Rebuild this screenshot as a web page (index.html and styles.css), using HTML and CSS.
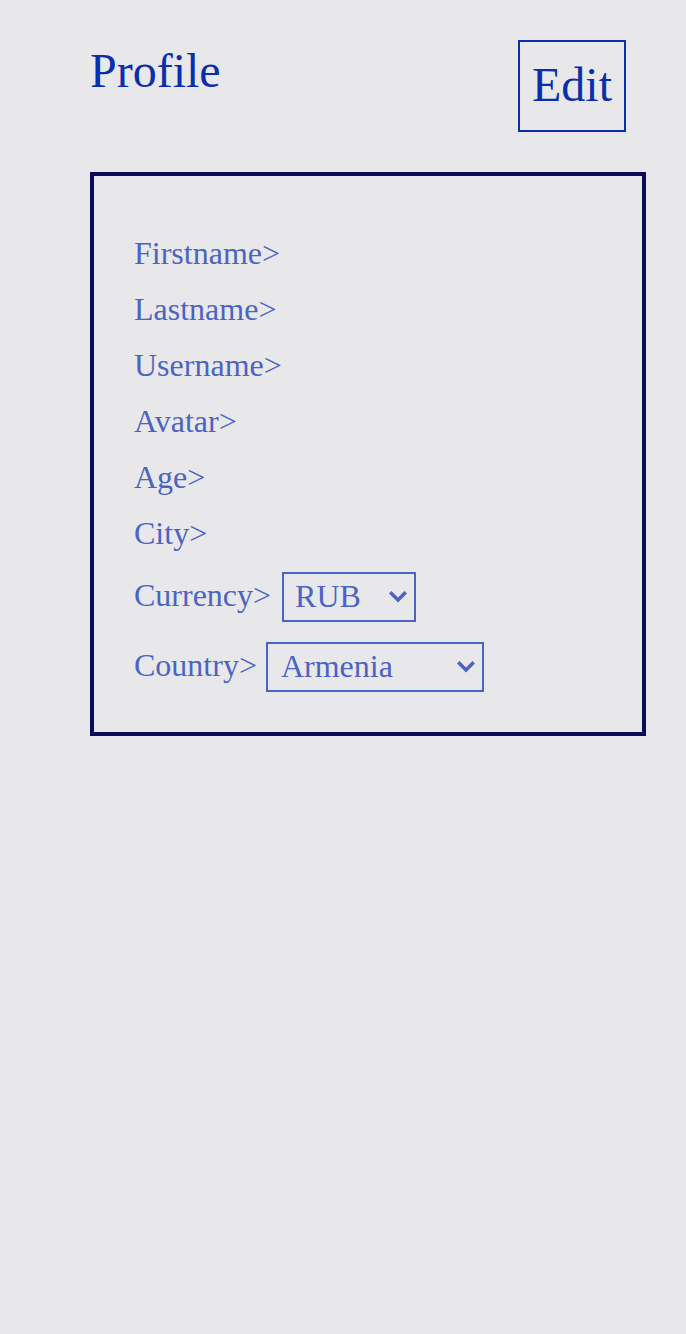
FILE: index.html
```html
<!DOCTYPE html>
<html>
<head>
<meta charset="utf-8">
<link rel="stylesheet" href="styles.css">
</head>
<body>
<header class="header">
  <h1 class="title">Profile</h1>
  <button class="edit-btn">Edit</button>
</header>
<section class="card">
  <div class="row">Firstname&gt;</div>
  <div class="row">Lastname&gt;</div>
  <div class="row">Username&gt;</div>
  <div class="row">Avatar&gt;</div>
  <div class="row">Age&gt;</div>
  <div class="row">City&gt;</div>
  <div class="row select-row currency-row">
    <span class="label label-currency">Currency&gt;</span>
    <span class="select-wrap">
      <select class="select select-currency">
        <option>RUB</option>
        <option>USD</option>
        <option>EUR</option>
      </select>
      <svg class="chevron" width="18" height="12" viewBox="0 0 18 12"><path d="M2.5 2.5 L9 9 L15.5 2.5" fill="none" stroke="#4b64c3" stroke-width="3.6" stroke-linecap="square"/></svg>
    </span>
  </div>
  <div class="row select-row country-row">
    <span class="label label-country">Country&gt;</span>
    <span class="select-wrap">
      <select class="select select-country">
        <option>Armenia</option>
        <option>Russia</option>
        <option>Georgia</option>
      </select>
      <svg class="chevron" width="18" height="12" viewBox="0 0 18 12"><path d="M2.5 2.5 L9 9 L15.5 2.5" fill="none" stroke="#4b64c3" stroke-width="3.6" stroke-linecap="square"/></svg>
    </span>
  </div>
</section>
</body>
</html>
```
FILE: styles.css
```css
html, body {
  margin: 0;
  padding: 0;
  background: #e8e8ea;
  font-family: "Liberation Serif", "Times New Roman", serif;
}

.header {
  display: flex;
  justify-content: space-between;
  align-items: flex-start;
  padding: 40px 60px 0 90px;
}

.title {
  margin: 3px 0 0 0;
  font-size: 48px;
  font-weight: normal;
  color: #0a2fae;
  line-height: normal;
}

.edit-btn {
  margin: 0;
  font-family: "Liberation Serif", "Times New Roman", serif;
  font-size: 48px;
  color: #0a2fae;
  background: transparent;
  border: 2px solid #0a2fae;
  border-radius: 0;
  padding: 12px 12px 16px 12px;
  line-height: normal;
  box-sizing: border-box;
  height: 92px;
  width: 108px;
  display: flex;
  align-items: center;
  justify-content: center;
}

.card {
  margin: 40px 0 0 90px;
  width: 556px;
  box-sizing: border-box;
  border: 4px solid #0b0b58;
  padding: 49px 40px 40px 40px;
  display: flex;
  flex-direction: column;
  color: #4b64c3;
  font-size: 32px;
}

.row {
  line-height: 56px;
  height: 56px;
}

.select-row {
  display: flex;
  align-items: center;
  height: 50px;
  line-height: normal;
}

.currency-row {
  margin-top: 11px;
}

.country-row {
  margin-top: 20px;
}

.label {
  padding-bottom: 3px;
}

.label-currency {
  margin-right: 11px;
}

.label-country {
  margin-right: 9px;
}

.select-wrap {
  position: relative;
  display: inline-flex;
}

.select {
  appearance: none;
  -webkit-appearance: none;
  font-family: "Liberation Serif", "Times New Roman", serif;
  font-size: 32px;
  color: #4b64c3;
  background: transparent;
  border: 2px solid #4b64c3;
  border-radius: 0;
  height: 50px;
  box-sizing: border-box;
  padding: 0 12px 3px 11px;
  margin: 0;
  outline: none;
}

.select-currency {
  width: 134px;
}

.select-country {
  width: 218px;
  padding-left: 13px;
}

.chevron {
  position: absolute;
  right: 9px;
  top: 19px;
  pointer-events: none;
}
```
